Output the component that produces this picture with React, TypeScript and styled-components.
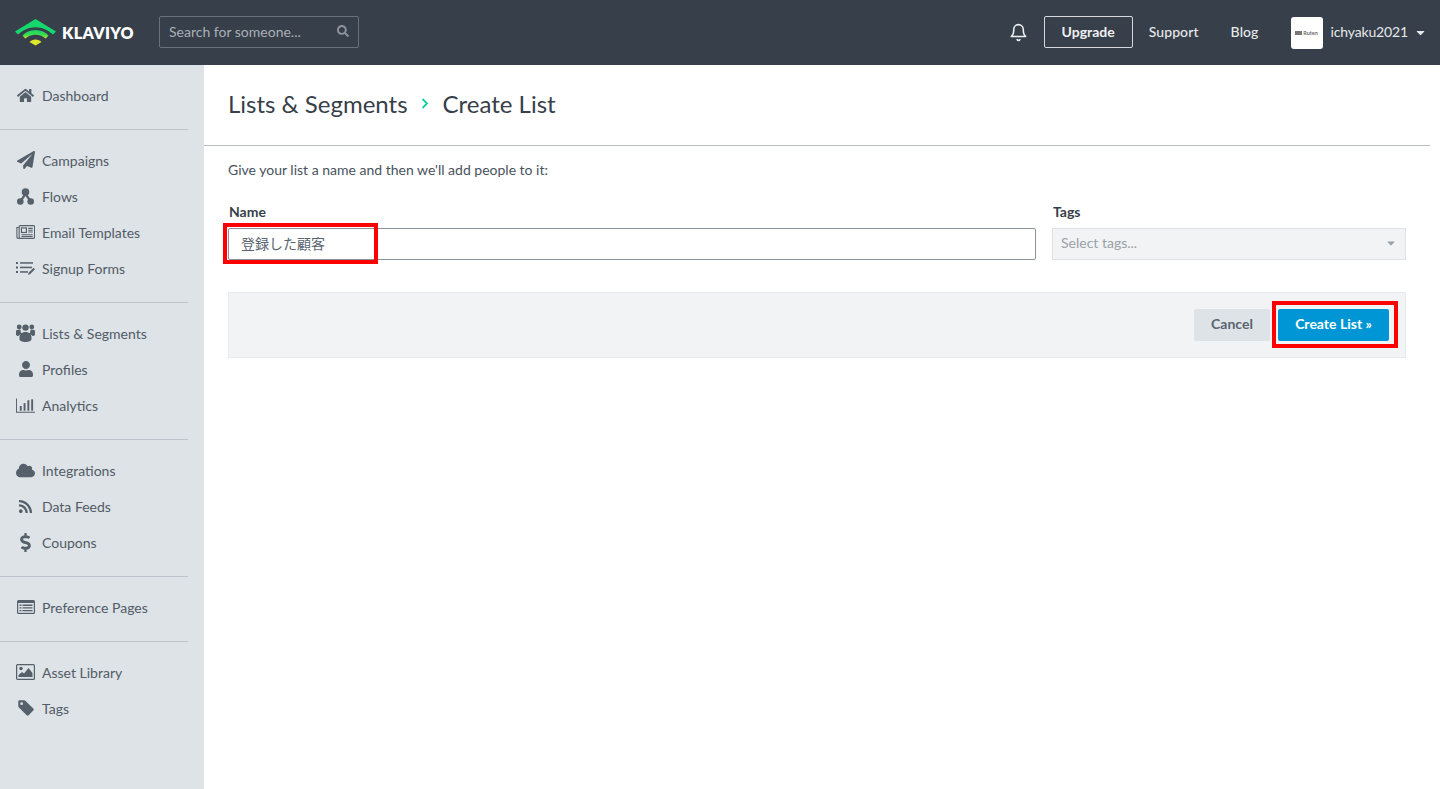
import React from "react";
import styled, { createGlobalStyle } from "styled-components";
import {
  FaHome, FaPaperPlane, FaUser, FaCloud, FaRss, FaDollarSign, FaSearch, FaCaretDown,
} from "react-icons/fa";
import { FiBell } from "react-icons/fi";

const Global = createGlobalStyle`
  html, body { margin: 0; padding: 0; background: #fff; }
  body { font-family: "Lato", "Noto Sans CJK JP", sans-serif; color: #373f4a; }
  * { box-sizing: border-box; }
`;

const Page = styled.div`
  width: 1440px;
  height: 789px;
  display: flex;
  flex-direction: column;
  overflow: hidden;
`;

const TopBar = styled.header`
  height: 65px;
  flex: none;
  background: #373f4a;
  display: flex;
  align-items: center;
  padding: 0 13px 1px 15px;
`;

const LogoBox = styled.div`
  display: flex;
  align-items: center;
  gap: 6px;
  width: 144px;
`;

const LogoWord = styled.span`
  color: #fff;
  font-family: "Lato", sans-serif;
  font-weight: 800;
  font-size: 16px;
  letter-spacing: 0.35px;
`;

const SearchBox = styled.div`
  width: 200px;
  height: 32px;
  border: 1px solid #69717b;
  border-radius: 2px;
  display: flex;
  align-items: center;
  justify-content: space-between;
  padding: 0 9px 2px;
  color: #aab0b7;
  font-size: 14px;
  svg { color: #8f959c; font-size: 12px; }
`;

const Spacer = styled.div`
  flex: 1;
`;

const Bell = styled.span`
  display: flex;
  color: #eef0f2;
  font-size: 19px;
  margin-right: 16px;
`;

const UpgradeButton = styled.button`
  width: 89px;
  height: 32px;
  background: transparent;
  border: 1px solid #d5d9dd;
  border-radius: 2px;
  color: #eef0f2;
  font: 700 14px "Lato", sans-serif;
  margin-right: 16px;
  padding: 0 0 2px;
`;

const TopLink = styled.a<{ $gap: number }>`
  color: #e6e9ec;
  font-size: 14px;
  font-weight: 500;
  letter-spacing: 0.1px;
  margin-right: ${(p) => p.$gap}px;
  margin-top: -2px;
`;

const Avatar = styled.div`
  width: 32px;
  height: 32px;
  border-radius: 3px;
  background: #fff;
  color: #6e6e6e;
  font-size: 5.5px;
  font-weight: 700;
  display: flex;
  align-items: center;
  justify-content: center;
  gap: 1px;
  margin-right: 8px;
  margin-top: 2px;
  &::before {
    content: "";
    width: 7px;
    height: 4px;
    background: #777;
  }
`;

const UserName = styled.span`
  color: #e6e9ec;
  font-size: 14px;
  letter-spacing: -0.15px;
  margin-top: -2px;
  margin-right: 6px;
`;

const Caret = styled.span`
  display: flex;
  color: #e6e9ec;
  font-size: 13px;
`;

const Body = styled.div`
  flex: 1;
  display: flex;
  min-height: 0;
`;

const Sidebar = styled.nav`
  width: 204px;
  flex: none;
  background: #dde3e6;
`;

const NavGroup = styled.div`
  width: 188px;
  padding: 13px 0 15px;
  border-bottom: 1px solid #bcc3cb;
  &:last-child { border-bottom: none; }
`;

const NavRow = styled.a`
  height: 36px;
  display: flex;
  align-items: center;
  color: #525b66;
  font-size: 14px;
  padding-bottom: 2px;
`;

const NavIcon = styled.span`
  width: 42px;
  flex: none;
  padding-left: 16px;
  display: flex;
  align-items: center;
  color: #56606b;
  font-size: 18px;
  svg { display: block; }
`;

const NavIconInner = styled.span`
  width: 19px;
  display: flex;
  justify-content: center;
`;

const Main = styled.main`
  width: 1226px;
  flex: none;
`;

const TitleBar = styled.div`
  height: 81px;
  padding: 0 24px 4px;
  border-bottom: 1px solid #b6bcc4;
  display: flex;
  align-items: center;
  font-size: 24px;
  color: #373f4a;
`;

const Chevron = styled.span`
  width: 35px;
  display: flex;
  justify-content: center;
`;

const Content = styled.div`
  padding: 15px 24px 0;
`;

const Intro = styled.p`
  margin: 0 0 24px;
  font-size: 14px;
  line-height: 18px;
  color: #49525d;
`;

const FormGrid = styled.div`
  display: grid;
  grid-template-columns: 808px 354px;
  column-gap: 16px;
`;

const Field = styled.div`
  position: relative;
`;

const FieldLabel = styled.label`
  display: block;
  font-size: 14px;
  font-weight: 700;
  line-height: 18px;
  margin: 0 0 7px 1px;
  color: #373f4a;
`;

const TextBox = styled.div`
  height: 32px;
  border: 1px solid #8d939b;
  border-radius: 2px;
  padding: 0 12px 2px;
  display: flex;
  align-items: center;
  font-size: 14px;
  color: #5a6470;
  font-family: "Noto Sans CJK JP", sans-serif;
`;

const SelectBox = styled.div`
  height: 32px;
  border: 1px solid #dde3e6;
  background: #f1f3f5;
  padding: 0 8px 3px;
  display: flex;
  align-items: center;
  justify-content: space-between;
  font-size: 14px;
  color: #9aa1a9;
  svg { font-size: 12px; color: #9aa1a9; }
`;

const Highlight = styled.div<{ $top: number; $left: number; $w: number; $h: number }>`
  position: absolute;
  top: ${(p) => p.$top}px;
  left: ${(p) => p.$left}px;
  width: ${(p) => p.$w}px;
  height: ${(p) => p.$h}px;
  border: 4px solid #fe0000;
  pointer-events: none;
`;

const ActionPanel = styled.div`
  position: relative;
  margin-top: 32px;
  width: 1178px;
  height: 66px;
  background: #f1f3f5;
  border: 1px solid #e8ebee;
  display: flex;
  align-items: center;
  justify-content: flex-end;
  gap: 8px;
  padding-right: 16px;
`;

const ActionButton = styled.button<{ $primary?: boolean }>`
  height: 32px;
  width: ${(p) => (p.$primary ? 111 : 76)}px;
  border: none;
  border-radius: 2px;
  background: ${(p) => (p.$primary ? "#0096d6" : "#dde3e6")};
  color: ${(p) => (p.$primary ? "#fff" : "#5a6470")};
  font: 700 14px "Lato", sans-serif;
  padding: 0 0 3px;
`;

const Logo = () => (
  <svg width="41" height="27" viewBox="0 0 41 27">
    <defs>
      <linearGradient id="lg" x1="0" y1="0" x2="0" y2="1">
        <stop offset="0" stopColor="#12d66b" />
        <stop offset="0.6" stopColor="#3fdc4e" />
        <stop offset="1" stopColor="#d5e82a" />
      </linearGradient>
    </defs>
    <path fill="#14d86c" d="M20.5 0 L41 12.5 L38 15.5 C33 11 27 8.2 20.5 8.2 C14 8.2 8 11 3 15.5 L0 12.5 Z" />
    <path fill="url(#lg)" d="M20.5 11 C26 11 30.5 13.2 33.5 16.5 L30.8 19.5 C28 17.3 24.5 15.8 20.5 15.8 C16.5 15.8 13 17.3 10.2 19.5 L7.5 16.5 C10.5 13.2 15 11 20.5 11 Z" />
    <path fill="#dfe92c" d="M20.5 20.5 C23 20.5 25 21.5 26.5 23 L20.5 26.5 L14.5 23 C16 21.5 18 20.5 20.5 20.5 Z" />
  </svg>
);

const UsersIcon = () => (
  <svg width="19" height="18" viewBox="0 0 19 18" fill="currentColor">
    <circle cx="3.2" cy="3" r="2.4" />
    <circle cx="15.8" cy="3" r="2.4" />
    <circle cx="9.5" cy="3.6" r="3.2" />
    <path d="M0 6.8C.4 6 1.4 5.8 3.2 5.8c.6 0 1 .1 1.4.2-.2 1.6.4 3 1.4 3.7C4 10.3 2.8 11.4 2.4 12 1 12 0 11.4 0 10.2z" />
    <path d="M19 6.8c-.4-.8-1.4-1-3.2-1-.6 0-1 .1-1.4.2.2 1.6-.4 3-1.4 3.7 2 .6 3.2 1.7 3.6 2.3 1.4 0 2.4-.6 2.4-1.8z" />
    <path d="M9.5 8c3.8 0 6 2.2 6 5.6v1.6c0 1.6-2.6 2.8-6 2.8s-6-1.2-6-2.8v-1.6C3.5 10.2 5.7 8 9.5 8z" />
  </svg>
);

const NewsIcon = () => (
  <svg width="21" height="16" viewBox="0 0 21 16" fill="none" stroke="currentColor">
    <rect x="3.5" y="1" width="17" height="14" rx="1" strokeWidth="1.2" />
    <path d="M3.5 3H1v10.5A1.5 1.5 0 0 0 2.5 15H4" strokeWidth="1.2" />
    <rect x="6" y="3.5" width="5.5" height="5" strokeWidth="1.3" />
    <path d="M13.5 4h5M13.5 6h5M13.5 8h5M6 11h12.5M6 13h12.5" strokeWidth="1.2" />
  </svg>
);

const FlowIcon = () => (
  <svg width="17" height="17" viewBox="0 0 17 17" fill="currentColor">
    <circle cx="8.5" cy="4" r="3.8" />
    <circle cx="3.3" cy="13.5" r="3.3" />
    <circle cx="13.7" cy="13.5" r="3.3" />
    <path d="M7 6 L3 12 L5 13 L8.5 8 L12 13 L14 12 L10 6 Z" />
  </svg>
);

const FormsIcon = () => (
  <svg width="19" height="14" viewBox="0 0 19 14" fill="currentColor">
    <rect x="0" y="1" width="2" height="2" />
    <rect x="0" y="5.5" width="2" height="2" />
    <rect x="0" y="10" width="2" height="2" />
    <rect x="4" y="1.2" width="13" height="1.5" />
    <rect x="4" y="5.7" width="12" height="1.5" />
    <rect x="4" y="10.2" width="8" height="1.5" />
    <path d="M12 13.8 L12.6 11.8 L17.6 6.8 L19 8.2 L14 13.2 Z" />
  </svg>
);

const ChartIcon = () => (
  <svg width="20" height="15" viewBox="0 0 20 15" fill="currentColor">
    <path d="M0 0h1v14h19v1H0z" />
    <rect x="4" y="8" width="2" height="5" />
    <rect x="8" y="5" width="2" height="8" />
    <rect x="12" y="2" width="2" height="11" />
    <rect x="16" y="1" width="2" height="12" />
  </svg>
);

const PrefIcon = () => (
  <svg width="18" height="14" viewBox="0 0 18 14">
    <rect width="18" height="14" rx="1.5" fill="currentColor" />
    <rect x="1.2" y="3" width="15.6" height="9.8" fill="#dde3e6" />
    <path fill="currentColor" d="M2.5 4.5h2v1.4h-2zM2.5 7.2h2v1.4h-2zM2.5 9.9h2v1.4h-2zM5.5 4.5h10v1.4h-10zM5.5 7.2h10v1.4h-10zM5.5 9.9h10v1.4h-10z" />
  </svg>
);

const ImageIcon = () => (
  <svg width="19" height="16" viewBox="0 0 19 16">
    <rect x="0.6" y="0.6" width="17.8" height="14.8" rx="1" fill="none" stroke="currentColor" strokeWidth="1.2" />
    <circle cx="5" cy="4.5" r="1.7" fill="currentColor" />
    <path fill="currentColor" d="M2.5 13 V11 L6 8 L8 9.5 L12.5 4 L16.5 9 V13 Z" />
  </svg>
);

const TagIcon = () => (
  <svg width="16" height="16" viewBox="0 0 16 16" fill="currentColor">
    <path fillRule="evenodd" d="M0.3 1.4A1.2 1.2 0 0 1 1.5 0.2H6.2c.4 0 .8.2 1.1.5l8 7.9c.6.6.6 1.4 0 2l-4.6 4.6c-.6.6-1.4.6-2 0l-8-8a1.6 1.6 0 0 1-.4-1.1zM3.6 5a1.3 1.3 0 1 0 0-2.7 1.3 1.3 0 0 0 0 2.7z" />
  </svg>
);

const groups: { label: string; icon: React.ReactNode }[][] = [
  [{ label: "Dashboard", icon: <FaHome size={17} /> }],
  [
    { label: "Campaigns", icon: <FaPaperPlane size={18} /> },
    { label: "Flows", icon: <FlowIcon /> },
    { label: "Email Templates", icon: <NewsIcon /> },
    { label: "Signup Forms", icon: <FormsIcon /> },
  ],
  [
    { label: "Lists & Segments", icon: <UsersIcon /> },
    { label: "Profiles", icon: <FaUser size={16} /> },
    { label: "Analytics", icon: <ChartIcon /> },
  ],
  [
    { label: "Integrations", icon: <FaCloud size={21} /> },
    { label: "Data Feeds", icon: <FaRss size={15} /> },
    { label: "Coupons", icon: <FaDollarSign size={19} /> },
  ],
  [{ label: "Preference Pages", icon: <PrefIcon /> }],
  [
    { label: "Asset Library", icon: <ImageIcon /> },
    { label: "Tags", icon: <TagIcon /> },
  ],
];

export default function App() {
  return (
    <Page>
      <Global />
      <TopBar>
        <LogoBox>
          <Logo />
          <LogoWord>KLAVIYO</LogoWord>
        </LogoBox>
        <SearchBox>
          Search for someone...
          <FaSearch />
        </SearchBox>
        <Spacer />
        <Bell><FiBell /></Bell>
        <UpgradeButton>Upgrade</UpgradeButton>
        <TopLink $gap={32}>Support</TopLink>
        <TopLink $gap={32}>Blog</TopLink>
        <Avatar>Ruten</Avatar>
        <UserName>ichyaku2021</UserName>
        <Caret><FaCaretDown /></Caret>
      </TopBar>
      <Body>
        <Sidebar>
          {groups.map((g, i) => (
            <NavGroup key={i}>
              {g.map((item) => (
                <NavRow key={item.label}>
                  <NavIcon><NavIconInner>{item.icon}</NavIconInner></NavIcon>
                  {item.label}
                </NavRow>
              ))}
            </NavGroup>
          ))}
        </Sidebar>
        <Main>
          <TitleBar>
            Lists &amp; Segments
            <Chevron>
              <svg width="8" height="11" viewBox="0 0 8 11" fill="none" stroke="#14cfa0" strokeWidth="1.8">
                <path d="M1.5 1 L6 5.5 L1.5 10" />
              </svg>
            </Chevron>
            Create List
          </TitleBar>
          <Content>
            <Intro>Give your list a name and then we'll add people to it:</Intro>
            <FormGrid>
              <Field>
                <FieldLabel>Name</FieldLabel>
                <TextBox>登録した顧客</TextBox>
                <Highlight $top={20} $left={-5} $w={155} $h={41} />
              </Field>
              <Field>
                <FieldLabel>Tags</FieldLabel>
                <SelectBox>
                  Select tags...
                  <FaCaretDown />
                </SelectBox>
              </Field>
            </FormGrid>
            <ActionPanel>
              <ActionButton>Cancel</ActionButton>
              <ActionButton $primary>Create List »</ActionButton>
              <Highlight $top={8} $left={1043} $w={126} $h={47} />
            </ActionPanel>
          </Content>
        </Main>
      </Body>
    </Page>
  );
}
